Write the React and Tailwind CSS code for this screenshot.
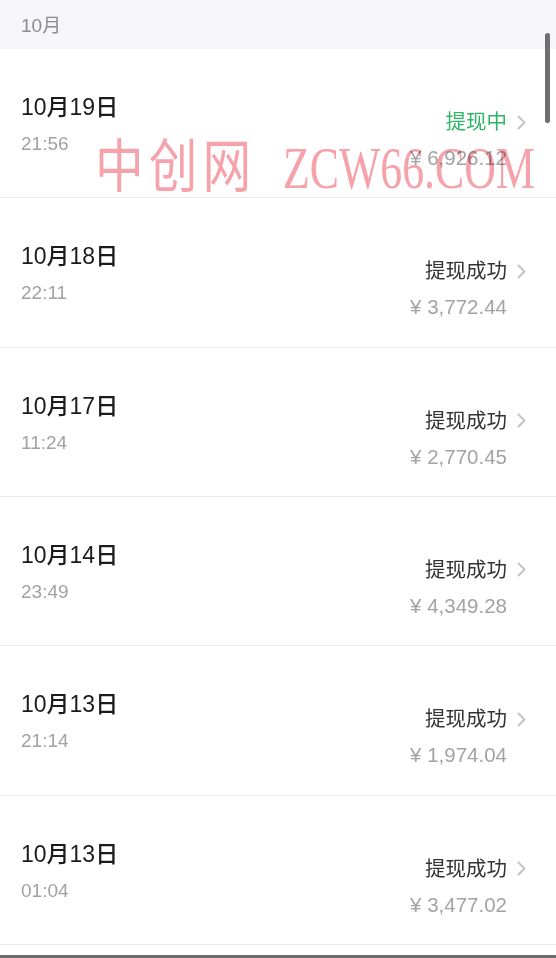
import React from 'react'

const records = [
  { date: '10月19日', time: '21:56', status: '提现中', amount: '¥ 6,926.12', pending: true },
  { date: '10月18日', time: '22:11', status: '提现成功', amount: '¥ 3,772.44' },
  { date: '10月17日', time: '11:24', status: '提现成功', amount: '¥ 2,770.45' },
  { date: '10月14日', time: '23:49', status: '提现成功', amount: '¥ 4,349.28' },
  { date: '10月13日', time: '21:14', status: '提现成功', amount: '¥ 1,974.04' },
  { date: '10月13日', time: '01:04', status: '提现成功', amount: '¥ 3,477.02' },
]

const font = { fontFamily: '"Liberation Sans", "Noto Sans CJK SC", sans-serif' }

function Chevron() {
  return (
    <svg width="11" height="15" viewBox="0 0 11 15" className="shrink-0">
      <path d="M2.5 1.5 L8.5 7.5 L2.5 13.5" fill="none" stroke="#c4c4c6" strokeWidth="2" strokeLinecap="round" strokeLinejoin="round" />
    </svg>
  )
}

function Row({ item }) {
  return (
    <div className="flex h-[149.33px] justify-between border-b border-[#e9e9eb] bg-white pl-[21px] pr-[29px]">
      <div className="flex flex-col pt-[43px]">
        <div className="text-[23px] font-medium leading-[30px] text-[#1b1b1b]">{item.date}</div>
        <div className="mt-[10px] text-[19px] leading-[24px] text-[#a2a2a4]">{item.time}</div>
      </div>
      <div className="flex flex-col items-end pt-[59px]">
        <div className="flex items-center gap-[9px]">
          <span className={`text-[20.5px] leading-[28px] ${item.pending ? 'text-[#2fb468]' : 'text-[#333333]'}`}>
            {item.status}
          </span>
          <Chevron />
        </div>
        <div className="mt-[8px] pr-[20px] text-[20.5px] leading-[28px] text-[#a3a3a5]">{item.amount}</div>
      </div>
    </div>
  )
}

export default function App() {
  return (
    <div className="relative h-[958px] w-[556px] overflow-hidden bg-white" style={font}>
      <div className="flex h-[49px] items-center bg-[#f6f5f9] pl-[21px] pt-[3px] text-[19px] text-[#8b8b90]">10月</div>

      {records.map((item, i) => (
        <Row key={i} item={item} />
      ))}

      <div className="h-[10px] bg-white" />
      <div className="h-[3px] bg-[#6b6b6b]" />

      {/* scroll indicator */}
      <div className="absolute left-[545px] top-[33px] h-[90px] w-[5px] rounded-full bg-[#6f6f71]" />

      {/* watermark */}
      <div
        className="pointer-events-none absolute left-[95px] top-[133px] flex items-center whitespace-nowrap text-[#f5a2aa] mix-blend-multiply"
        style={{ fontFamily: '"Liberation Serif", "Noto Sans CJK SC", serif' }}
      >
        <span className="inline-block w-[162px] origin-left scale-x-[0.84] text-[58px] leading-[70px] tracking-[6px]">中创网</span>
        <span className="ml-[26px] inline-block origin-left scale-x-[0.73] text-[60px] leading-[70px]">ZCW66.COM</span>
      </div>
    </div>
  )
}
